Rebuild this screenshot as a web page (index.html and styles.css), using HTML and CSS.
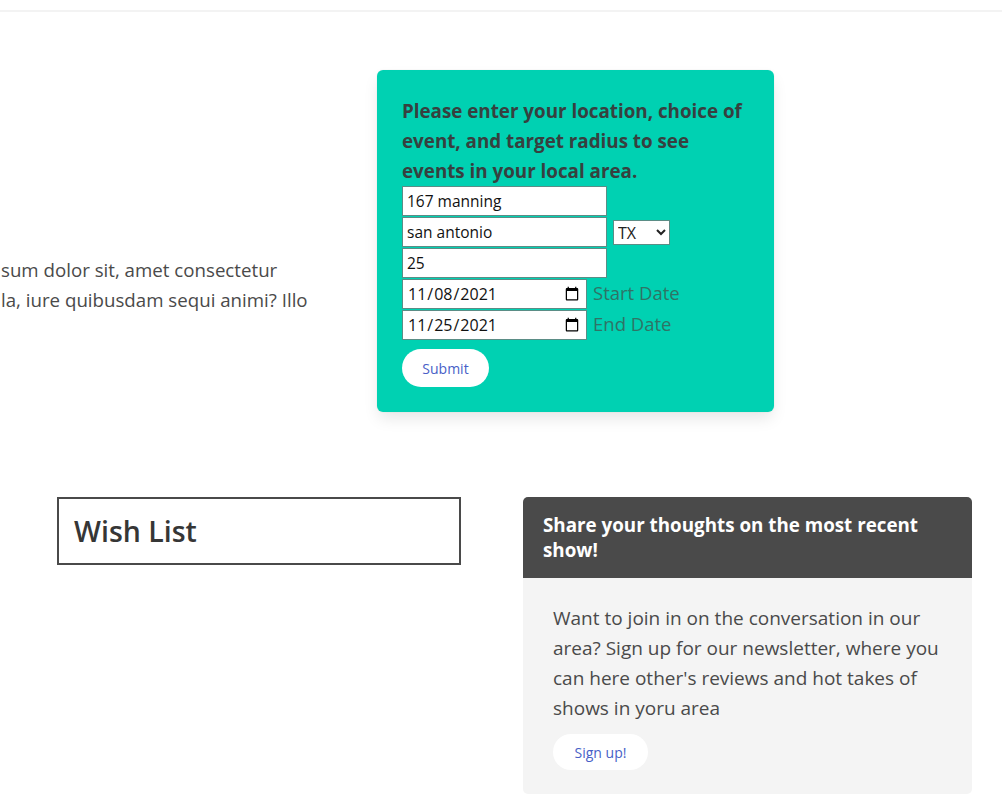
FILE: index.html
```html
<!DOCTYPE html>
<html lang="en">
<head>
<meta charset="utf-8">
<title>Events</title>
<link rel="stylesheet" href="styles.css">
</head>
<body>
<nav class="topbar"></nav>
<section class="hero">
  <div class="intro">
    <p>sum dolor sit, amet consectetur<br>la, iure quibusdam sequi animi? Illo</p>
  </div>
  <form class="search-box">
    <h2 class="search-title">Please enter your location, choice of event, and target radius to see events in your local area.</h2>
    <div class="fields">
      <input class="field" type="text" value="167 manning">
      <div class="row">
        <input class="field" type="text" value="san antonio">
        <select class="state"><option>TX</option></select>
      </div>
      <input class="field" type="text" value="25">
      <div class="row">
        <input class="date" type="date" value="2021-11-08">
        <span class="date-label">Start Date</span>
      </div>
      <div class="row">
        <input class="date" type="date" value="2021-11-25">
        <span class="date-label">End Date</span>
      </div>
    </div>
    <button class="pill-btn submit" type="button">Submit</button>
  </form>
</section>
<section class="lower">
  <div class="wishlist">
    <h2>Wish List</h2>
  </div>
  <article class="card">
    <header class="card-head">Share your thoughts on the most recent show!</header>
    <div class="card-body">
      <p>Want to join in on the conversation in our area? Sign up for our newsletter, where you can here other's reviews and hot takes of shows in yoru area</p>
      <button class="pill-btn signup" type="button">Sign up!</button>
    </div>
  </article>
</section>
</body>
</html>
```

FILE: styles.css
```css
html, body {
  margin: 0;
  padding: 0;
  background: #fff;
  overflow: hidden;
}
body {
  font-family: "Open Sans", "Noto Sans", sans-serif;
  color: #4a4a4a;
  width: 1002px;
  height: 806px;
}
.topbar {
  height: 10px;
  border-bottom: 2px solid #f3f3f3;
}
.hero {
  display: flex;
  align-items: flex-start;
  padding-top: 58px;
}
.intro {
  width: 377px;
  padding-top: 185px;
}
.intro p {
  margin: 0;
  padding-left: 1px;
  font-size: 18.7px;
  line-height: 30px;
  color: #4a4a4a;
}
.search-box {
  width: 397px;
  box-sizing: border-box;
  background: #00d1b2;
  border-radius: 6px;
  padding: 26px 25px 25px 25px;
  box-shadow: 0 8px 16px -2px rgba(10, 10, 10, 0.1), 0 0 0 1px rgba(10, 10, 10, 0.02);
}
.search-title {
  margin: 0;
  font-size: 18.8px;
  font-weight: 700;
  line-height: 30px;
  color: #37403f;
}
.fields {
  display: flex;
  flex-direction: column;
  gap: 1px;
}
.row {
  display: flex;
  align-items: center;
  gap: 6px;
}
.field, .date {
  box-sizing: border-box;
  height: 30px;
  border: 1px solid #5b8d86;
  background: #fff;
  font-family: "Open Sans", sans-serif;
  font-size: 15.5px;
  color: #111;
  padding: 0 4px;
  margin: 0;
  outline: none;
}
.field {
  width: 205px;
}
.date {
  width: 185px;
  font-size: 16px;
}
.state {
  box-sizing: border-box;
  height: 25px;
  width: 57px;
  border: 1px solid #5b8d86;
  background: #fff;
  font-family: "Open Sans", sans-serif;
  font-size: 16px;
  color: #222;
  margin: 0;
}
.date-label {
  font-size: 18.5px;
  line-height: 26px;
  margin-bottom: 3px;
  color: #2f7466;
}
.pill-btn {
  background: #fff;
  border: 1px solid transparent;
  border-radius: 9999px;
  color: #485fc7;
  font-family: "Open Sans", sans-serif;
  font-size: 14px;
  cursor: pointer;
  padding: 0;
}
.submit {
  margin-top: 9px;
  width: 87px;
  height: 38px;
}
.lower {
  display: flex;
  align-items: flex-start;
  margin-top: 85px;
  padding-left: 57px;
}
.wishlist {
  width: 404px;
  height: 68px;
  box-sizing: border-box;
  border: 2px solid #4a4a4a;
  display: flex;
  align-items: center;
  padding-left: 15px;
}
.wishlist h2 {
  margin: 0;
  font-size: 28.5px;
  font-weight: 600;
  color: #363636;
}
.card {
  margin-left: 62px;
  width: 449px;
  border-radius: 5px;
  overflow: hidden;
  background: #f4f4f4;
}
.card-head {
  background: #4a4a4a;
  color: #fff;
  font-weight: 700;
  font-size: 18.8px;
  line-height: 25px;
  padding: 16px 40px 15px 20px;
}
.card-body {
  padding: 25px 30px 24px 30px;
}
.card-body p {
  margin: 0 0 11px 0;
  font-size: 19px;
  line-height: 30px;
  color: #4a4a4a;
}
.signup {
  width: 95px;
  height: 36px;
}
```
